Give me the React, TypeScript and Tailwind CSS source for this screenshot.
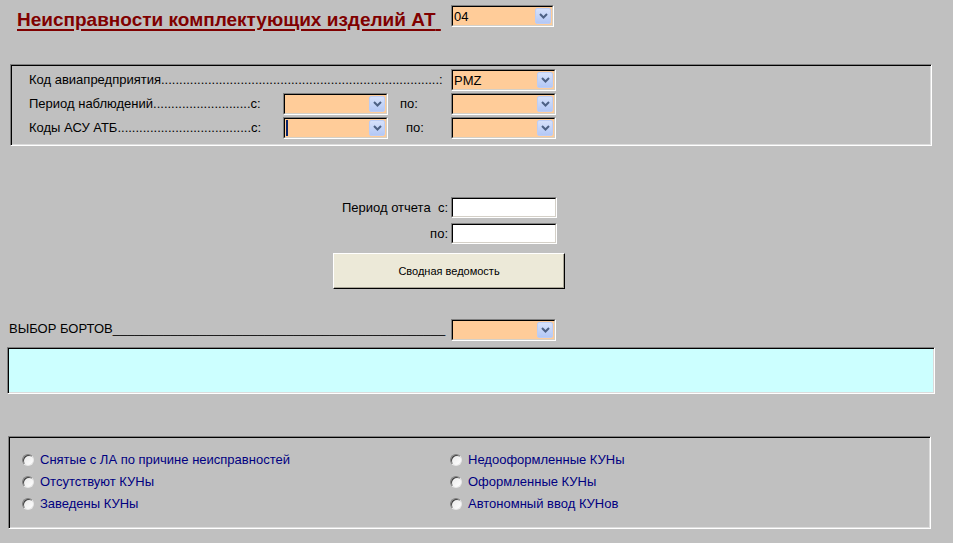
import React from 'react';

// Старый ASP-отчёт: серый фон, вдавленные рамки, оранжевые комбобоксы.

function Chevron() {
  return (
    <svg width="9" height="6" viewBox="0 0 9 6" fill="none">
      <path d="M1 1 L4.5 4.5 L8 1" stroke="#4d6185" strokeWidth="2" />
    </svg>
  );
}

function Combo({ value, width, caret }: { value?: string; width: string; caret?: boolean }) {
  return (
    <div
      className={`${width} h-[22px] shrink-0 flex border border-t-[#808080] border-l-[#808080] border-r-white border-b-white`}
    >
      <div className="flex-1 flex border border-t-black border-l-black border-r-[#d4d0c8] border-b-[#d4d0c8] bg-[#ffcc99]">
        <div className="flex-1 flex items-center pl-[1px] text-[13px] leading-none text-black">
          {caret && <span className="w-[2px] h-[16px] bg-[#0a246a]" />}
          {value}
        </div>
        <div className="w-[16px] my-[1px] mr-[1px] rounded-[2px] border border-[#bccdf5] bg-gradient-to-b from-[#d6e1fb] to-[#b4c8f5] flex items-center justify-center">
          <Chevron />
        </div>
      </div>
    </div>
  );
}

function TextInput() {
  return (
    <div className="w-[106px] h-[21px] flex border border-t-[#808080] border-l-[#808080] border-r-white border-b-white">
      <div className="flex-1 border border-t-black border-l-black border-r-[#d4d0c8] border-b-[#d4d0c8] bg-white" />
    </div>
  );
}

function DotLabel({ text, dots, end, width }: { text: string; dots: number; end: string; width: string }) {
  return (
    <div className={`${width} shrink-0 whitespace-nowrap`}>
      {text}
      {'.'.repeat(dots)}
      {end}
    </div>
  );
}

function Radio({ label }: { label: string }) {
  return (
    <div className="h-[22px] flex items-center gap-[6px]">
      <span className="w-[12px] h-[12px] rounded-full bg-gradient-to-br from-[#e6e6e6] to-white border border-t-[#808080] border-l-[#808080] border-r-[#e8e8e8] border-b-[#e8e8e8] shadow-[inset_1px_1px_0_#404040]" />
      <span className="text-[#000080]">{label}</span>
    </div>
  );
}

const inset =
  'border border-t-[#808080] border-l-[#808080] border-r-white border-b-white shadow-[inset_1px_1px_0_#000,inset_-1px_-1px_0_#dcdcdc]';

export default function App() {
  return (
    <div className="w-full h-[543px] overflow-hidden bg-[#c0c0c0] font-['Liberation_Sans',Arial,sans-serif] text-[13px] text-black">
      {/* заголовок */}
      <div className="h-[64px] pt-[5px] flex items-start">
        <div className="w-[451px] pl-[17px] pt-[4px]">
          <span className="text-[19px] leading-[22px] font-bold text-[#800000] underline decoration-2 underline-offset-[3px] whitespace-pre">
            Неисправности комплектующих изделий АТ{' '}
          </span>
        </div>
        <Combo value="04" width="w-[103px]" />
      </div>

      {/* параметры */}
      <div className={`ml-[10px] w-[922px] h-[82px] ${inset} pt-[4px] pl-[18px] flex flex-col gap-[2px]`}>
        <div className="flex items-center h-[22px]">
          <DotLabel text="Код авиапредприятия" dots={77} end=":" width="w-[416px]" />
          <div className="ml-[6px]">
            <Combo value="PMZ" width="w-[105px]" />
          </div>
        </div>
        <div className="flex items-center h-[22px]">
          <DotLabel text="Период наблюдений" dots={27} end="с:" width="w-[234px]" />
          <div className="ml-[20px]">
            <Combo width="w-[105px]" />
          </div>
          <div className="w-[63px] pl-[12px]">по:</div>
          <Combo width="w-[105px]" />
        </div>
        <div className="flex items-center h-[22px]">
          <DotLabel text="Коды АСУ АТБ" dots={37} end="с:" width="w-[234px]" />
          <div className="ml-[20px]">
            <Combo width="w-[105px]" caret />
          </div>
          <div className="w-[63px] pl-[18px]">по:</div>
          <Combo width="w-[105px]" />
        </div>
      </div>

      {/* период отчета */}
      <div className="w-[557px] mt-[51px] flex flex-col items-end gap-[5px]">
        <div className="flex items-center">
          <span className="whitespace-pre">Период отчета  с:</span>
          <div className="ml-[3px]">
            <TextInput />
          </div>
        </div>
        <div className="flex items-center">
          <span>по:</span>
          <div className="ml-[3px]">
            <TextInput />
          </div>
        </div>
      </div>
      <button className="block ml-[333px] mt-[9px] w-[232px] h-[36px] bg-[#ece9d8] border border-t-white border-l-white border-r-black border-b-black shadow-[inset_-1px_-1px_0_#aca899] text-[11px] text-black">
        Сводная ведомость
      </button>

      {/* выбор бортов */}
      <div className="mt-[30px] flex items-center">
        <div className="w-[445px] pl-[9px] pb-[3px] whitespace-nowrap">
          ВЫБОР БОРТОВ{'_'.repeat(46)}
        </div>
        <div className="ml-[6px]">
          <Combo width="w-[105px]" />
        </div>
      </div>
      <div className={`ml-[7px] mt-[5px] w-[928px] h-[47px] bg-[#ccffff] ${inset}`} />

      {/* типы отчетов */}
      <div className={`ml-[8px] mt-[42px] w-[923px] h-[93px] ${inset} pt-[12px] pl-[13px] flex`}>
        <div className="w-[428px] flex flex-col">
          <Radio label="Снятые с ЛА по причине неисправностей" />
          <Radio label="Отсутствуют КУНы" />
          <Radio label="Заведены КУНы" />
        </div>
        <div className="flex flex-col">
          <Radio label="Недооформленные КУНы" />
          <Radio label="Оформленные КУНы" />
          <Radio label="Автономный ввод КУНов" />
        </div>
      </div>
    </div>
  );
}
